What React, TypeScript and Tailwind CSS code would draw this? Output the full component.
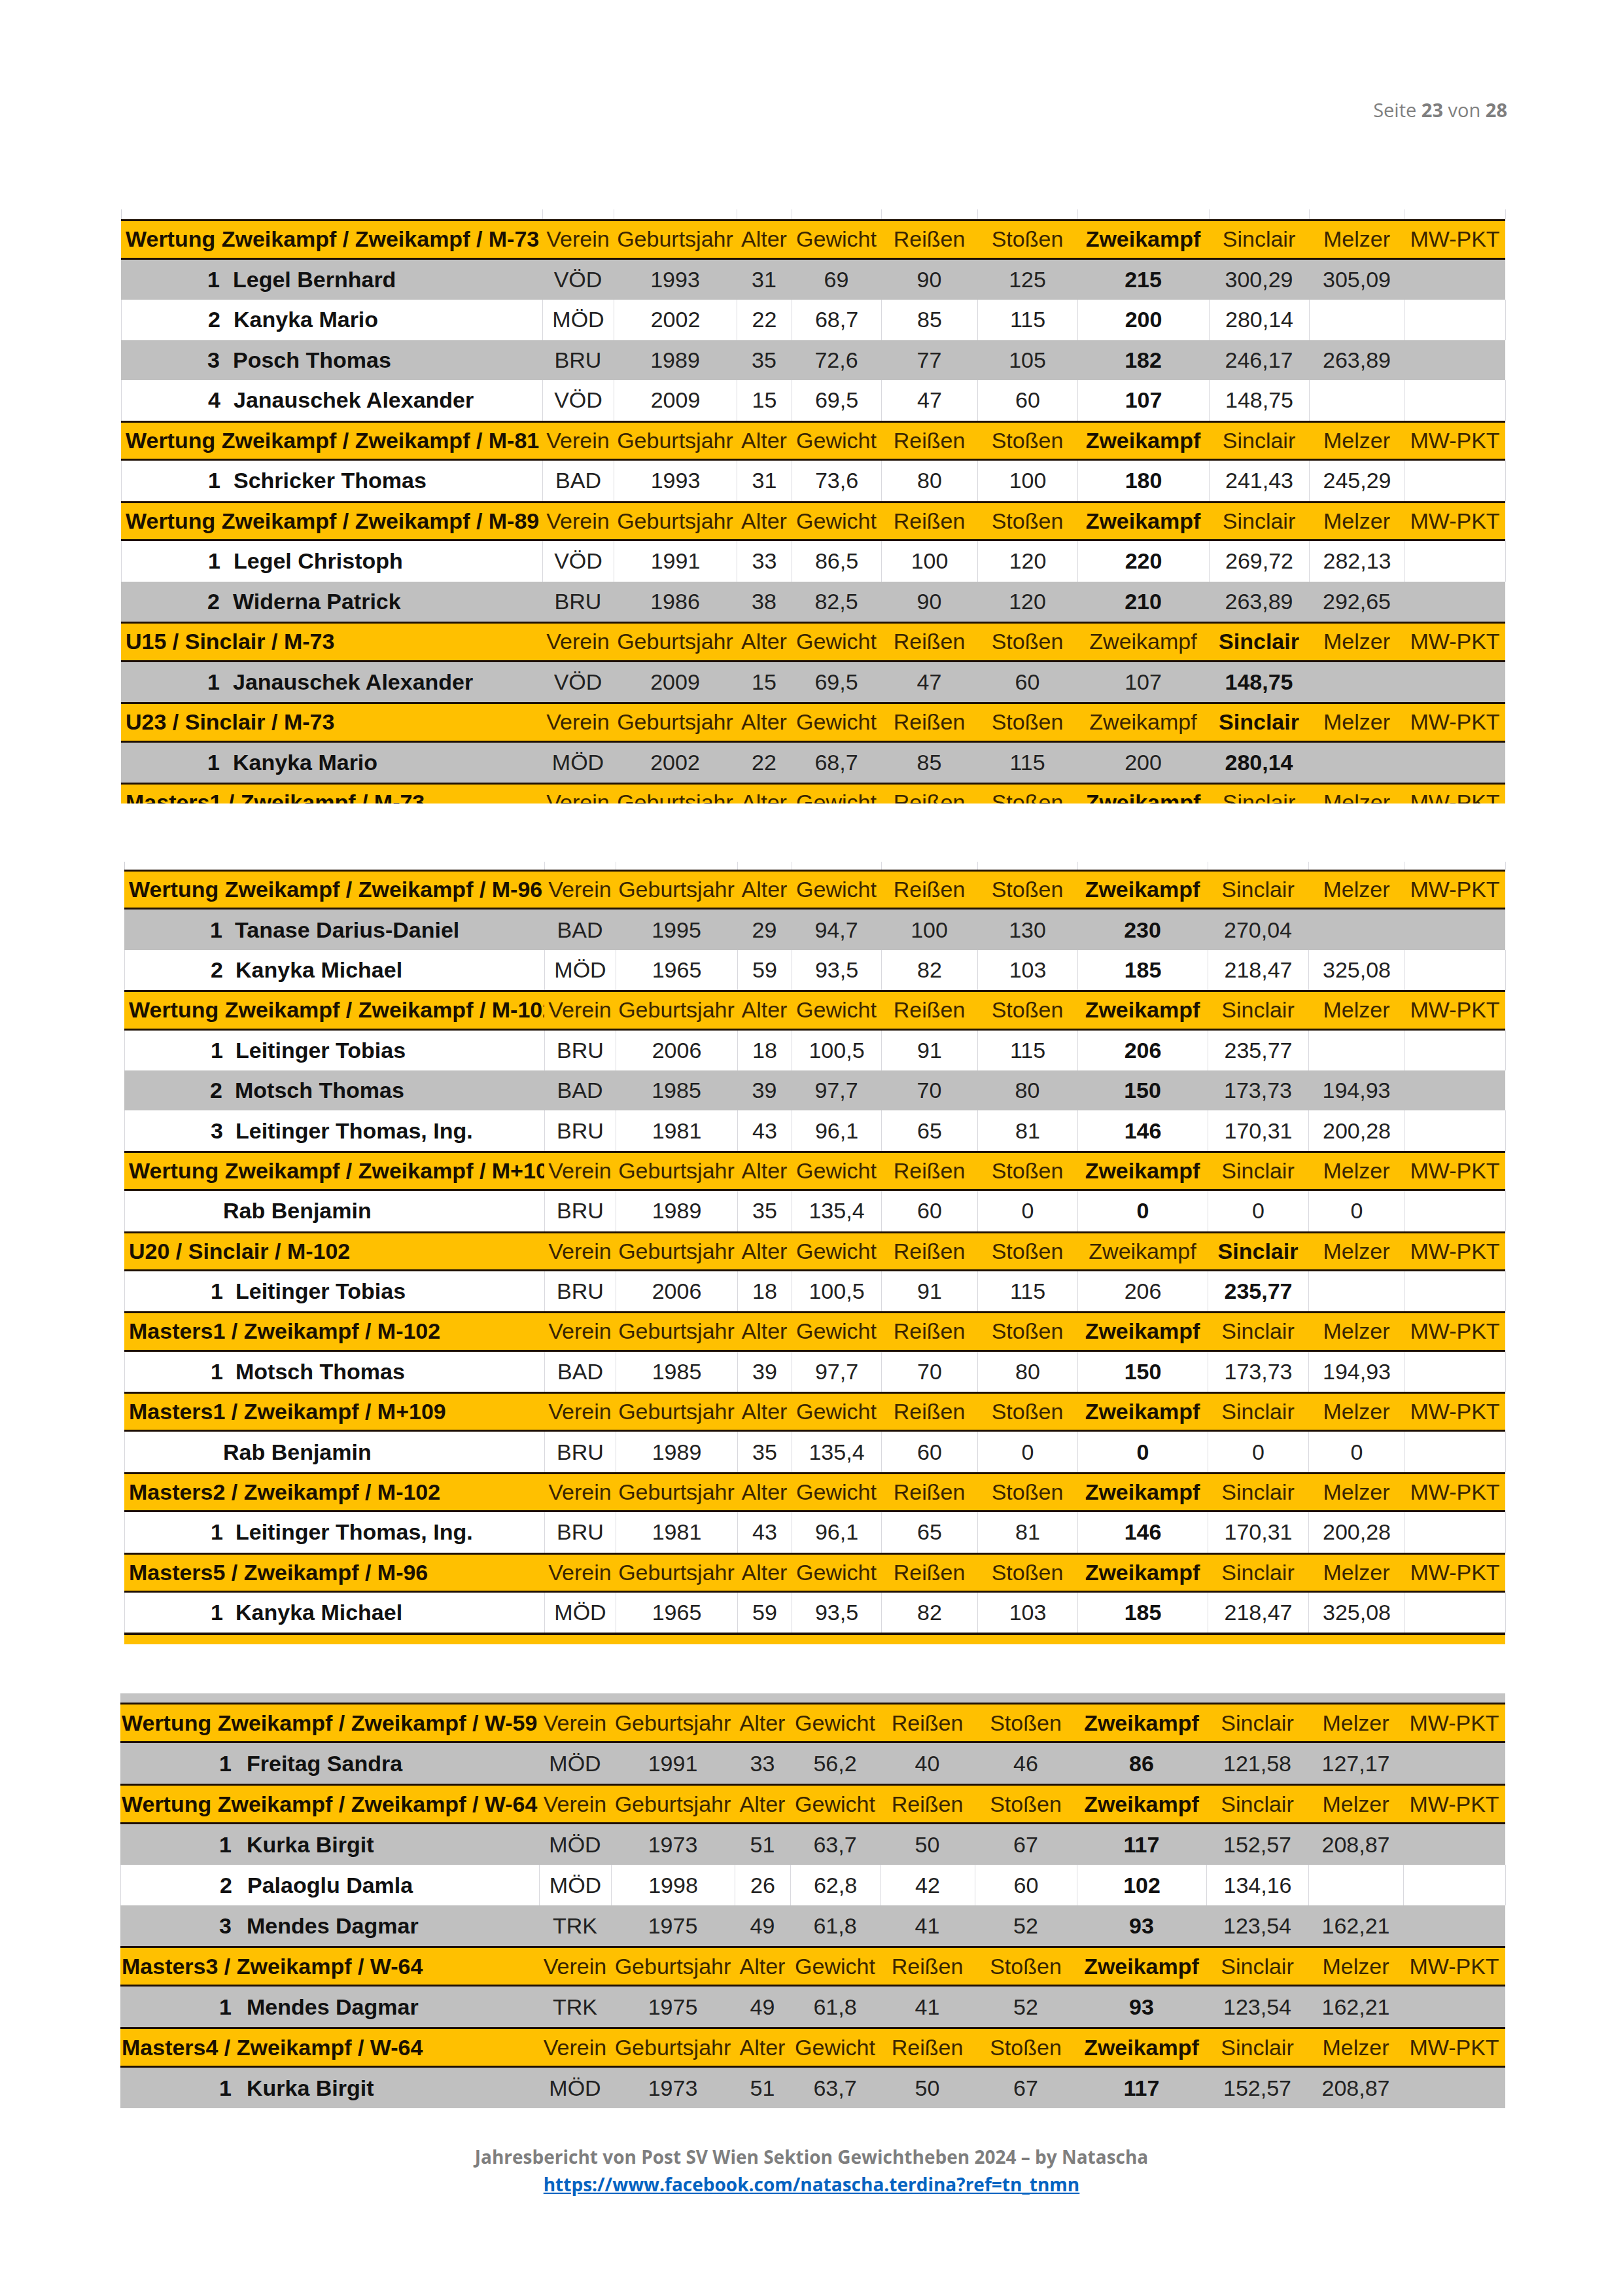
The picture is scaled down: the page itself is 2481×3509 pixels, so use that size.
import React from "react";

type Kind = "zk" | "sc";

type Row =
	| { h: true; label: string; bold: Kind }
	| {
			h?: false;
			rank?: string;
			name: string;
			v: string[];
			gray?: boolean;
			bold: Kind;
	  };

interface TableCfg {
	cols: string;
	rowH: string;
	labelPad: string;
	rankW: string;
	nameGap: string;
	noRankPad: string;
}

const HEAD = ["Verein", "Geburtsjahr", "Alter", "Gewicht", "Reißen", "Stoßen", "Zweikampf", "Sinclair", "Melzer", "MW-PKT"];

const t1: TableCfg = {
	cols: "grid-cols-[644px_109px_188px_84px_137px_147px_153px_201px_153px_146px_154px]",
	rowH: "h-[61.5px]",
	labelPad: "pl-[7px]",
	rankW: "w-[151px]",
	nameGap: "ml-[20px]",
	noRankPad: "pl-[155px]",
};

const t2: TableCfg = {
	cols: "grid-cols-[642px_109px_186px_83px_137px_147px_153px_199px_154px_147px_154px]",
	rowH: "h-[61.4px]",
	labelPad: "pl-[7px]",
	rankW: "w-[150px]",
	nameGap: "ml-[19px]",
	noRankPad: "pl-[150px]",
};

const t3: TableCfg = {
	cols: "grid-cols-[640px_110px_189px_85px_137px_145px_156px_198px_156px_145px_156px]",
	rowH: "h-[62px]",
	labelPad: "pl-[2px]",
	rankW: "w-[170px]",
	nameGap: "ml-[23px]",
	noRankPad: "pl-[170px]",
};

const table1: Row[] = [
	{ h: true, label: "Wertung Zweikampf / Zweikampf / M-73", bold: "zk" },
	{ rank: "1", name: "Legel Bernhard", v: ["VÖD", "1993", "31", "69", "90", "125", "215", "300,29", "305,09", ""], gray: true, bold: "zk" },
	{ rank: "2", name: "Kanyka Mario", v: ["MÖD", "2002", "22", "68,7", "85", "115", "200", "280,14", "", ""], bold: "zk" },
	{ rank: "3", name: "Posch Thomas", v: ["BRU", "1989", "35", "72,6", "77", "105", "182", "246,17", "263,89", ""], gray: true, bold: "zk" },
	{ rank: "4", name: "Janauschek Alexander", v: ["VÖD", "2009", "15", "69,5", "47", "60", "107", "148,75", "", ""], bold: "zk" },
	{ h: true, label: "Wertung Zweikampf / Zweikampf / M-81", bold: "zk" },
	{ rank: "1", name: "Schricker Thomas", v: ["BAD", "1993", "31", "73,6", "80", "100", "180", "241,43", "245,29", ""], bold: "zk" },
	{ h: true, label: "Wertung Zweikampf / Zweikampf / M-89", bold: "zk" },
	{ rank: "1", name: "Legel Christoph", v: ["VÖD", "1991", "33", "86,5", "100", "120", "220", "269,72", "282,13", ""], bold: "zk" },
	{ rank: "2", name: "Widerna Patrick", v: ["BRU", "1986", "38", "82,5", "90", "120", "210", "263,89", "292,65", ""], gray: true, bold: "zk" },
	{ h: true, label: "U15 / Sinclair / M-73", bold: "sc" },
	{ rank: "1", name: "Janauschek Alexander", v: ["VÖD", "2009", "15", "69,5", "47", "60", "107", "148,75", "", ""], gray: true, bold: "sc" },
	{ h: true, label: "U23 / Sinclair / M-73", bold: "sc" },
	{ rank: "1", name: "Kanyka Mario", v: ["MÖD", "2002", "22", "68,7", "85", "115", "200", "280,14", "", ""], gray: true, bold: "sc" },
];

const table2: Row[] = [
	{ h: true, label: "Wertung Zweikampf / Zweikampf / M-96", bold: "zk" },
	{ rank: "1", name: "Tanase Darius-Daniel", v: ["BAD", "1995", "29", "94,7", "100", "130", "230", "270,04", "", ""], gray: true, bold: "zk" },
	{ rank: "2", name: "Kanyka Michael", v: ["MÖD", "1965", "59", "93,5", "82", "103", "185", "218,47", "325,08", ""], bold: "zk" },
	{ h: true, label: "Wertung Zweikampf / Zweikampf / M-102", bold: "zk" },
	{ rank: "1", name: "Leitinger Tobias", v: ["BRU", "2006", "18", "100,5", "91", "115", "206", "235,77", "", ""], bold: "zk" },
	{ rank: "2", name: "Motsch Thomas", v: ["BAD", "1985", "39", "97,7", "70", "80", "150", "173,73", "194,93", ""], gray: true, bold: "zk" },
	{ rank: "3", name: "Leitinger Thomas, Ing.", v: ["BRU", "1981", "43", "96,1", "65", "81", "146", "170,31", "200,28", ""], bold: "zk" },
	{ h: true, label: "Wertung Zweikampf / Zweikampf / M+109", bold: "zk" },
	{ name: "Rab Benjamin", v: ["BRU", "1989", "35", "135,4", "60", "0", "0", "0", "0", ""], bold: "zk" },
	{ h: true, label: "U20 / Sinclair / M-102", bold: "sc" },
	{ rank: "1", name: "Leitinger Tobias", v: ["BRU", "2006", "18", "100,5", "91", "115", "206", "235,77", "", ""], bold: "sc" },
	{ h: true, label: "Masters1 / Zweikampf / M-102", bold: "zk" },
	{ rank: "1", name: "Motsch Thomas", v: ["BAD", "1985", "39", "97,7", "70", "80", "150", "173,73", "194,93", ""], bold: "zk" },
	{ h: true, label: "Masters1 / Zweikampf / M+109", bold: "zk" },
	{ name: "Rab Benjamin", v: ["BRU", "1989", "35", "135,4", "60", "0", "0", "0", "0", ""], bold: "zk" },
	{ h: true, label: "Masters2 / Zweikampf / M-102", bold: "zk" },
	{ rank: "1", name: "Leitinger Thomas, Ing.", v: ["BRU", "1981", "43", "96,1", "65", "81", "146", "170,31", "200,28", ""], bold: "zk" },
	{ h: true, label: "Masters5 / Zweikampf / M-96", bold: "zk" },
	{ rank: "1", name: "Kanyka Michael", v: ["MÖD", "1965", "59", "93,5", "82", "103", "185", "218,47", "325,08", ""], bold: "zk" },
];

const table3: Row[] = [
	{ h: true, label: "Wertung Zweikampf / Zweikampf / W-59", bold: "zk" },
	{ rank: "1", name: "Freitag Sandra", v: ["MÖD", "1991", "33", "56,2", "40", "46", "86", "121,58", "127,17", ""], gray: true, bold: "zk" },
	{ h: true, label: "Wertung Zweikampf / Zweikampf / W-64", bold: "zk" },
	{ rank: "1", name: "Kurka Birgit", v: ["MÖD", "1973", "51", "63,7", "50", "67", "117", "152,57", "208,87", ""], gray: true, bold: "zk" },
	{ rank: "2", name: "Palaoglu Damla", v: ["MÖD", "1998", "26", "62,8", "42", "60", "102", "134,16", "", ""], bold: "zk" },
	{ rank: "3", name: "Mendes Dagmar", v: ["TRK", "1975", "49", "61,8", "41", "52", "93", "123,54", "162,21", ""], gray: true, bold: "zk" },
	{ h: true, label: "Masters3 / Zweikampf / W-64", bold: "zk" },
	{ rank: "1", name: "Mendes Dagmar", v: ["TRK", "1975", "49", "61,8", "41", "52", "93", "123,54", "162,21", ""], gray: true, bold: "zk" },
	{ h: true, label: "Masters4 / Zweikampf / W-64", bold: "zk" },
	{ rank: "1", name: "Kurka Birgit", v: ["MÖD", "1973", "51", "63,7", "50", "67", "117", "152,57", "208,87", ""], gray: true, bold: "zk" },
];

function HeaderRow({ cfg, label, bold }: { cfg: TableCfg; label: string; bold: Kind }) {
	return (
		<div className={`grid ${cfg.cols} ${cfg.rowH} bg-[#ffc000] border-y-[3px] border-[#1e1005] text-[#3a2500]`}>
			<div className={`flex items-center overflow-hidden whitespace-nowrap ${cfg.labelPad} font-bold text-[#1a1000]`}>
				{label}
			</div>
			{HEAD.map((h, i) => {
				const isBold = (bold === "zk" && i === 6) || (bold === "sc" && i === 7);
				return (
					<div
						key={h}
						className={`flex items-center justify-center whitespace-nowrap ${isBold ? "font-bold text-[#1a1000]" : ""}`}
					>
						{h}
					</div>
				);
			})}
		</div>
	);
}

function DataRow({ cfg, row }: { cfg: TableCfg; row: Exclude<Row, { h: true }> }) {
	const line = row.gray ? "" : "border-r border-[#d9d9de]";
	return (
		<div className={`grid ${cfg.cols} ${cfg.rowH} ${row.gray ? "bg-[#c0c0c0]" : "bg-white border-l border-[#d9d9de]"} text-[#222]`}>
			<div className={`flex items-center whitespace-nowrap font-bold text-[#111] ${line}`}>
				{row.rank ? (
					<>
						<span className={`${cfg.rankW} text-right`}>{row.rank}</span>
						<span className={cfg.nameGap}>{row.name}</span>
					</>
				) : (
					<span className={cfg.noRankPad}>{row.name}</span>
				)}
			</div>
			{row.v.map((val, i) => {
				const isBold = (row.bold === "zk" && i === 6) || (row.bold === "sc" && i === 7);
				return (
					<div
						key={i}
						className={`flex items-center justify-center whitespace-nowrap ${line} ${isBold ? "font-bold text-[#111]" : ""}`}
					>
						{val}
					</div>
				);
			})}
		</div>
	);
}

function Table({ cfg, rows }: { cfg: TableCfg; rows: Row[] }) {
	return (
		<div className="flex flex-col">
			{rows.map((r, i) =>
				r.h ? (
					<HeaderRow key={i} cfg={cfg} label={r.label} bold={r.bold} />
				) : (
					<DataRow key={i} cfg={cfg} row={r} />
				)
			)}
		</div>
	);
}

// faint spreadsheet grid peeking out above a table
function GridStrip({ cfg, h, gray }: { cfg: TableCfg; h: string; gray?: boolean }) {
	return (
		<div className={`grid ${cfg.cols} ${h} ${gray ? "bg-[#c4c4c4]" : "bg-white border-l border-[#d0d0d6]"}`}>
			{Array.from({ length: 11 }).map((_, i) => (
				<div key={i} className={gray ? "" : "border-r border-[#dcdce2]"} />
			))}
		</div>
	);
}

export default function App() {
	return (
		<div className="w-[2481px] h-[3509px] bg-white font-['Liberation_Sans',Arial,sans-serif] text-[34px]">
			<div className="pt-[149px] pr-[177px] flex justify-end h-[187px] font-['Open_Sans',sans-serif] text-[29px] leading-[38px] text-[#7f7f7f]">
				<span>
					Seite <b>23</b> von <b>28</b>
				</span>
			</div>

			{/* table 1 */}
			<div className="mt-[133px] ml-[185px] w-[2116px]">
				<GridStrip cfg={t1} h="h-[15px]" />
				<Table cfg={t1} rows={table1} />
				<div className="h-[32px] overflow-hidden">
					<HeaderRow cfg={t1} label="Masters1 / Zweikampf / M-73" bold="zk" />
				</div>
			</div>

			{/* table 2 */}
			<div className="mt-[89px] ml-[190px] w-[2111px]">
				<GridStrip cfg={t2} h="h-[12px]" />
				<Table cfg={t2} rows={table2} />
				<div className="h-[18px] bg-[#ffc000] border-t-[4px] border-[#1e1005]" />
			</div>

			{/* table 3 */}
			<div className="mt-[75px] ml-[184px] w-[2117px]">
				<GridStrip cfg={t3} h="h-[14px]" gray />
				<Table cfg={t3} rows={table3} />
			</div>

			<div className="mt-[53px] flex flex-col items-center font-['Open_Sans',sans-serif] font-bold text-[28px] leading-[42px]">
				<span className="text-[#7f7f7f]">Jahresbericht von Post SV Wien Sektion Gewichtheben 2024 – by Natascha</span>
				<a href="#" className="text-[#0563c1] underline">
					https://www.facebook.com/natascha.terdina?ref=tn_tnmn
				</a>
			</div>
		</div>
	);
}
